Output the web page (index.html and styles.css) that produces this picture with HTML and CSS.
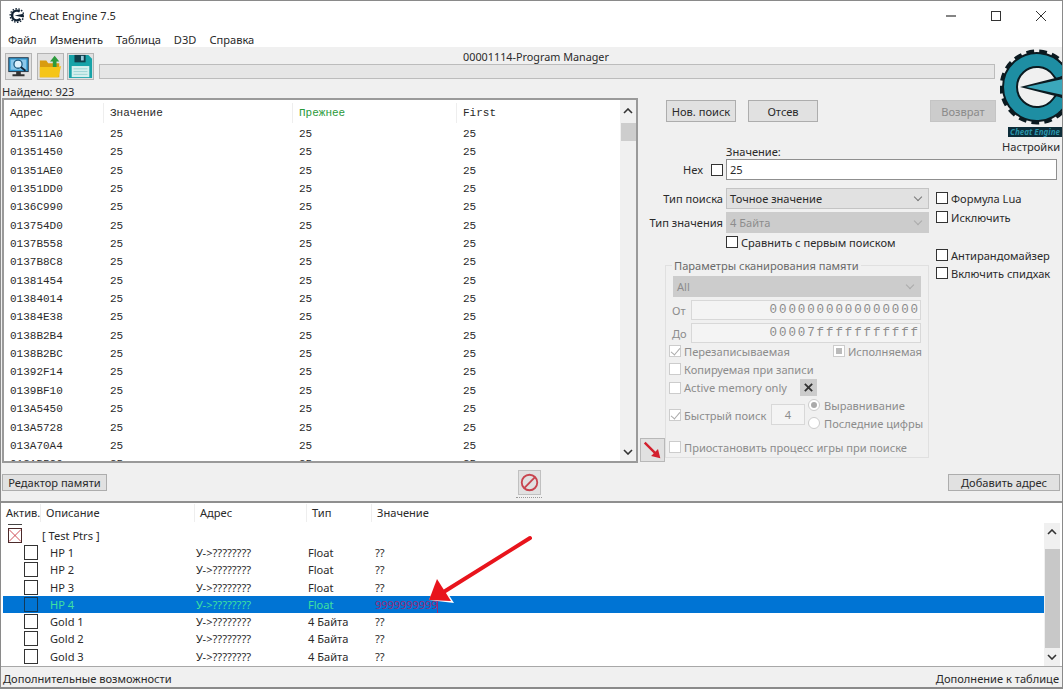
FILE: index.html
```html
<!DOCTYPE html>
<html lang="ru">
<head>
<meta charset="utf-8">
<title>Cheat Engine 7.5</title>
<link rel="stylesheet" href="styles.css">
</head>
<body>
<div class="window">
  <header class="titlebar">
    <svg class="app-icon" viewBox="0 0 16 16"><circle cx="8.5" cy="8" r="5.2" fill="none" stroke="#123" stroke-width="2.6" stroke-dasharray="23 15" stroke-dashoffset="-4"/><circle cx="8.5" cy="8" r="7.2" fill="none" stroke="#123" stroke-width="1.6" stroke-dasharray="1.6 1.6"/><path d="M15.5 6 6 8l9.500 2z" fill="#123"/></svg>
    <span class="app-title">Cheat Engine 7.5</span>
    <div class="win-controls">
      <svg viewBox="0 0 12 12"><path d="M1 6h10" stroke="#333" stroke-width="1.2"/></svg>
      <svg viewBox="0 0 12 12"><rect x="1.5" y="1.5" width="9" height="9" fill="none" stroke="#333"/></svg>
      <svg viewBox="0 0 12 12"><path d="M1 1l10 10M11 1 1 11" stroke="#333"/></svg>
    </div>
  </header>
  <nav class="menubar"><span class="m1">Файл</span><span class="m2">Изменить</span><span class="m3">Таблица</span><span class="m4">D3D</span><span class="m5">Справка</span></nav>

  <div class="upper">
    <div class="toolbar">
      <button class="tool t1"><svg viewBox="0 0 27 27"><rect x="3" y="4" width="21" height="15" fill="#2f98d0" stroke="#234"/><rect x="5" y="6" width="17" height="11" fill="#8cc8ea"/><circle cx="13" cy="11" r="4.4" fill="#dff1fb" stroke="#1c5a80" stroke-width="1.4"/><path d="m16 14 5 4" stroke="#123" stroke-width="2"/><path d="M11 19h5v3h-5zM7 22h13v2H7z" fill="#333"/></svg></button>
      <button class="tool t2"><svg viewBox="0 0 27 27"><path d="M2 7h7l2 3h12v15H2z" fill="#d99c10"/><path d="M2 14h20l3-1-3 12H2z" fill="#f5c518"/><path d="M18 2l5 6h-3v6h-4V8h-3z" fill="#2c9a3c"/></svg></button>
      <button class="tool t3"><svg viewBox="0 0 27 27"><path d="M1 1h21l4 4v21H1z" fill="#17a3a8"/><rect x="7" y="1" width="12" height="8" fill="#113f4a"/><rect x="14" y="2" width="3" height="5" fill="#9cd"/><rect x="4" y="13" width="19" height="12" fill="#d6f0ee"/><path d="M6 16h15M6 19h15M6 22h15" stroke="#8cc" stroke-width=".8"/></svg></button>
      <div class="process">
        <div class="process-name">00001114-Program Manager</div>
        <div class="progress"></div>
      </div>
    </div>
    <div class="found">Найдено: 923</div>

    <div class="logo-cell">
      <svg class="logo" viewBox="0 0 63 77">
        <circle cx="38" cy="38" r="34.500" fill="none" stroke="#0b1a20" stroke-width="6" stroke-dasharray="7.500 5" stroke-dashoffset="-27"/>
        <path d="M64 19 59.600 21.800A27 27 0 1 0 59.600 54.200L64 57" fill="none" stroke="#0b1a20" stroke-width="16"/>
        <path d="M64 19 59.600 21.800A27 27 0 1 0 59.600 54.200L64 57" fill="none" stroke="#1e8ea3" stroke-width="12"/>
        <path d="M64 27 21 38l43 11z" fill="#0b1a20"/>
        <path d="M64 30 27 38l37 8z" fill="#3ba7bb"/>
      </svg>
      <div class="logo-name">Cheat Engine</div>
      <div class="settings">Настройки</div>
    </div>

    <section class="scanlist">
      <div class="scan-head">
        <span>Адрес</span><span>Значение</span><span class="prev">Прежнее</span><span>First</span>
      </div>
      <div class="scan-body">
        <div class="scan-rows">
          <div class="srow"><span>013511A0</span><span>25</span><span>25</span><span>25</span></div>
          <div class="srow"><span>01351450</span><span>25</span><span>25</span><span>25</span></div>
          <div class="srow"><span>01351AE0</span><span>25</span><span>25</span><span>25</span></div>
          <div class="srow"><span>01351DD0</span><span>25</span><span>25</span><span>25</span></div>
          <div class="srow"><span>0136C990</span><span>25</span><span>25</span><span>25</span></div>
          <div class="srow"><span>013754D0</span><span>25</span><span>25</span><span>25</span></div>
          <div class="srow"><span>0137B558</span><span>25</span><span>25</span><span>25</span></div>
          <div class="srow"><span>0137B8C8</span><span>25</span><span>25</span><span>25</span></div>
          <div class="srow"><span>01381454</span><span>25</span><span>25</span><span>25</span></div>
          <div class="srow"><span>01384014</span><span>25</span><span>25</span><span>25</span></div>
          <div class="srow"><span>01384E38</span><span>25</span><span>25</span><span>25</span></div>
          <div class="srow"><span>0138B2B4</span><span>25</span><span>25</span><span>25</span></div>
          <div class="srow"><span>0138B2BC</span><span>25</span><span>25</span><span>25</span></div>
          <div class="srow"><span>01392F14</span><span>25</span><span>25</span><span>25</span></div>
          <div class="srow"><span>0139BF10</span><span>25</span><span>25</span><span>25</span></div>
          <div class="srow"><span>013A5450</span><span>25</span><span>25</span><span>25</span></div>
          <div class="srow"><span>013A5728</span><span>25</span><span>25</span><span>25</span></div>
          <div class="srow"><span>013A70A4</span><span>25</span><span>25</span><span>25</span></div>
          <div class="srow"><span>013AB5C0</span><span>25</span><span>25</span><span>25</span></div>
        </div>
      </div>
      <div class="vscroll scan-scroll">
        <svg class="sarrow" viewBox="0 0 10 6"><path d="M1 5l4-4 4 4" fill="none" stroke="#333" stroke-width="1.6"/></svg>
        <div class="scan-thumb"></div>
        <svg class="sarrow push-end" viewBox="0 0 10 6"><path d="M1 1l4 4 4-4" fill="none" stroke="#333" stroke-width="1.6"/></svg>
      </div>
    </section>

    <div class="scan-buttons">
      <button class="btn b-new">Нов. поиск</button>
      <button class="btn b-next">Отсев</button>
      <button class="btn b-undo" disabled>Возврат</button>
    </div>

    <div class="form">
      <div class="value-label">Значение:</div>
      <div class="hex-row">
        <span class="hex">Hex</span><span class="cb hex-cb"></span>
        <div class="value-input">25</div>
      </div>
      <div class="form-lower">
        <div class="form-main">
          <div class="field-row r-search">
            <label class="flabel">Тип поиска</label>
            <div class="select">Точное значение<i class="chev"></i></div>
          </div>
          <div class="field-row r-type">
            <label class="flabel">Тип значения</label>
            <div class="select off">4 Байта<i class="chev"></i></div>
          </div>
          <div class="compare"><span class="cb"></span>Сравнить с первым поиском</div>
          <div class="group-row">
            <button class="arrow-btn"><svg viewBox="0 0 25 24"><path d="M4 4l12 12" stroke="#d3202e" stroke-width="2.6"/><path d="M21 21l-10-2.5 7.5-7.5z" fill="#d3202e"/></svg></button>
            <fieldset class="group">
              <legend>Параметры сканирования памяти</legend>
              <div class="select off g-select">All<i class="chev"></i></div>
              <div class="range r-from"><span class="rl">От</span><div class="range-input">0000000000000000</div></div>
              <div class="range r-to"><span class="rl">До</span><div class="range-input">00007fffffffffff</div></div>
              <div class="gcheck two c-write">
                <span class="pair"><span class="cb dim ticked"></span>Перезаписываемая</span>
                <span class="pair"><span class="cb dim filled"></span>Исполняемая</span>
              </div>
              <div class="gcheck c-cow"><span class="cb dim"></span>Копируемая при записи</div>
              <div class="gcheck c-active"><span class="cb dim"></span>Active memory only<span class="xbtn"><svg viewBox="0 0 12 12"><path d="M2 2l8 8M10 2l-8 8" stroke="#333" stroke-width="2"/></svg></span></div>
              <div class="fast">
                <div class="fast-check"><span class="cb dim ticked"></span>Быстрый поиск</div>
                <div class="fast-num">4</div>
                <div class="radios">
                  <div class="radio-row"><span class="radio on"></span>Выравнивание</div>
                  <div class="radio-row"><span class="radio"></span>Последние цифры</div>
                </div>
              </div>
              <div class="gcheck c-pause"><span class="cb dim"></span>Приостановить процесс игры при поиске</div>
            </fieldset>
          </div>
        </div>
        <div class="form-side">
          <div class="side-check s1"><span class="cb"></span>Формула Lua</div>
          <div class="side-check s2"><span class="cb"></span>Исключить</div>
          <div class="side-check s3"><span class="cb"></span>Антирандомайзер</div>
          <div class="side-check s4"><span class="cb"></span>Включить спидхак</div>
        </div>
      </div>
    </div>
  </div>

  <div class="actions">
    <button class="btn b-mem">Редактор памяти</button>
    <button class="stop"><svg viewBox="0 0 23 24"><circle cx="11.5" cy="12" r="8.5" fill="none" stroke="#c8454f" stroke-width="2"/><path d="M6 18 17.500 6" stroke="#c8454f" stroke-width="2"/></svg></button>
    <button class="btn b-add">Добавить адрес</button>
  </div>
  <div class="splitter"><span class="grip"></span></div>

  <section class="table">
    <div class="thead">
      <span class="h1">Актив.</span><span class="h2">Описание</span><span class="h3">Адрес</span><span class="h4">Тип</span><span class="h5">Значение</span>
    </div>
    <div class="tbody">
      <div class="rows">
        <div class="row group-head"><span class="name"><span class="cbx crossed"><svg viewBox="0 0 14 14"><path d="M0 0l14 14M14 0 0 14" stroke="#c8323c"/></svg></span>[ Test Ptrs ]</span></div>
        <div class="row"><span class="name"><span class="cbx"></span>HP 1</span><span>У-&gt;????????</span><span>Float</span><span>??</span></div>
        <div class="row"><span class="name"><span class="cbx"></span>HP 2</span><span>У-&gt;????????</span><span>Float</span><span>??</span></div>
        <div class="row"><span class="name"><span class="cbx"></span>HP 3</span><span>У-&gt;????????</span><span>Float</span><span>??</span></div>
        <div class="row selected"><span class="name"><span class="cbx"></span>HP 4</span><span>У-&gt;????????</span><span>Float</span><span class="editing">9999999999</span></div>
        <div class="row"><span class="name"><span class="cbx"></span>Gold 1</span><span>У-&gt;????????</span><span>4 Байта</span><span>??</span></div>
        <div class="row"><span class="name"><span class="cbx"></span>Gold 2</span><span>У-&gt;????????</span><span>4 Байта</span><span>??</span></div>
        <div class="row"><span class="name"><span class="cbx"></span>Gold 3</span><span>У-&gt;????????</span><span>4 Байта</span><span>??</span></div>
      </div>
      <div class="vscroll table-scroll">
        <svg class="sarrow" viewBox="0 0 10 6"><path d="M1 5l4-4 4 4" fill="none" stroke="#333" stroke-width="1.6"/></svg>
        <div class="table-thumb"></div>
        <svg class="sarrow push-end" viewBox="0 0 10 6"><path d="M1 1l4 4 4-4" fill="none" stroke="#333" stroke-width="1.6"/></svg>
      </div>
    </div>
  </section>

  <footer class="status"><span>Дополнительные возможности</span><span>Дополнение к таблице</span></footer>

  <svg class="annotation" viewBox="0 0 1063 689"><path d="M429 600 438 578 454 603z" fill="#fff"/><path d="M530 538 442 593" stroke="#e8141c" stroke-width="4" stroke-linecap="round"/><path d="M429 600 437 579 451 601z" fill="#e8141c"/></svg>
</div>
</body>
</html>
```

FILE: styles.css
```css
* { box-sizing: border-box; }
html, body { margin: 0; padding: 0; }
body { width: 1063px; height: 689px; overflow: hidden; font-family: "Noto Sans", "Open Sans", sans-serif; font-size: 11.1px; color: #2a2a2a; }
button { font: inherit; color: inherit; padding: 0; }

.window { position: relative; width: 1063px; height: 689px; display: flex; flex-direction: column; background: #f0f0f0; border: 1px solid #8a8a8a; border-bottom-width: 2px; }

.titlebar { height: 29px; flex: none; background: #fff; display: flex; align-items: center; padding-left: 8px; }
.app-icon { width: 15px; height: 15px; }
.app-title { margin-left: 5px; font-size: 11px; }
.win-controls { margin-left: auto; display: flex; gap: 33px; padding-right: 15px; }
.win-controls svg { width: 12px; height: 12px; }

.menubar { height: 17px; flex: none; background: #fff; display: flex; align-items: center; padding: 1px 0 0 7px; }
.m2, .m3, .m4, .m5 { margin-left: 13px; }

.upper { flex: none; height: 416px; display: grid; grid-template-columns: 639px 360px 62px; grid-template-rows: 37px 14px 48px 317px; }

.toolbar { grid-column: 1 / 3; grid-row: 1; display: flex; padding: 6px 0 0 4px; }
.tool { width: 27px; height: 27px; background: #e1e1e1; border: 1px solid #b4b4b4; display: flex; }
.tool svg { width: 100%; height: 100%; }
.t2 { margin-left: 5px; }
.t3 { margin-left: 3px; }
.process { margin: -3px 0 0 5px; width: 896px; }
.process-name { height: 14px; line-height: 14px; text-align: center; font-size: 10.8px; padding-right: 22px; }
.progress { height: 15px; background: #e6e6e6; border: 1px solid #bcbcbc; }

.found { grid-column: 1 / 3; grid-row: 2; padding-left: 1px; line-height: 16px; }

.logo-cell { grid-column: 3; grid-row: 1 / 5; z-index: 1; padding-top: 2px; height: 110px; overflow: hidden; }
.logo { display: block; width: 63px; height: 77px; margin-left: -1px; }
.logo-name { margin: 1px 0 0 8px; width: 54px; height: 10px; background: #0c2c38; color: #2a93a8; font-size: 8px; line-height: 10px; font-weight: 700; font-style: italic; white-space: nowrap; overflow: hidden; text-align: center; }
.settings { margin: 3px 0 0 2px; text-align: left; line-height: 14px; }

.scanlist { grid-column: 1; grid-row: 3 / 5; margin-left: 1px; width: 636px; background: #fff; border: 2px solid #9a9a9a; display: grid; grid-template-columns: 1fr 16px; grid-template-rows: 25px 1fr; overflow: hidden; }
.scan-head, .srow { display: grid; grid-template-columns: 100px 189px 164px 1fr; font-family: "Liberation Mono", monospace; font-size: 11px; }
.scan-head { grid-column: 1; grid-row: 1; align-items: center; }
.scan-head span { padding-left: 6px; line-height: 20px; border-right: 1px solid #eee; }
.scan-head span:last-child { border-right: 0; }
.scan-head .prev { color: #2a9a3a; }
.scan-body { grid-column: 1; grid-row: 2; overflow: hidden; }
.srow { height: 18.35px; line-height: 18px; }
.srow span { padding-left: 6px; }
.scan-scroll { grid-column: 2; grid-row: 1 / 3; }

.vscroll { display: flex; flex-direction: column; align-items: center; background: #f0f0f0; }
.sarrow { width: 10px; height: 6px; flex: none; }
.push-end { margin-top: auto; }
.scan-scroll .sarrow:first-child { margin-top: 8px; }
.scan-scroll .push-end { margin-bottom: 6px; }
.scan-thumb { width: 15px; height: 18px; margin-top: 9px; background: #cdcdcd; }

.scan-buttons { grid-column: 2; grid-row: 3; display: flex; align-items: flex-start; padding: 2px 0 0 26px; }
.btn { height: 22px; background: #e1e1e1; border: 1px solid #adadad; }
.b-new { width: 70px; }
.b-next { width: 70px; margin-left: 12px; }
.b-undo { width: 66px; margin-left: auto; margin-right: 4px; background: #ccc; color: #8a8a8a; border-color: #c4c4c4; }

.form { grid-column: 2 / 4; grid-row: 4; padding-left: 0; }
.value-label { margin-left: 86px; height: 13px; line-height: 11px; }
.hex-row { display: flex; align-items: center; height: 21px; }
.hex { margin-left: 43px; width: 28px; }
.hex-cb { margin-right: 3px; }
.value-input { width: 331px; height: 21px; background: #fff; border: 1px solid #8f8f8f; padding-left: 3px; line-height: 19px; }

.cb { display: inline-block; flex: none; width: 12px; height: 12px; border: 1px solid #333; background: #fff; position: relative; }
.cb.dim { border-color: #ccc; }
.ticked::after { content: ""; position: absolute; left: 3px; top: 0; width: 4px; height: 8px; border: solid #aaa; border-width: 0 1.4px 1.4px 0; transform: rotate(40deg); }
.filled::after { content: ""; position: absolute; left: 2px; top: 2px; width: 6px; height: 6px; background: #bbb; }

.form-lower { display: flex; margin-top: 8px; }
.form-main { width: 289px; flex: none; }
.field-row { display: flex; align-items: center; height: 21px; }
.r-type { margin-top: 3px; }
.flabel { width: 83px; margin-right: 3px; text-align: right; white-space: nowrap; }
.select { position: relative; width: 203px; height: 21px; background: #e1e1e1; border: 1px solid #c4c4c4; padding-left: 3px; line-height: 19px; }
.select.off { background: #ccc; color: #8c8c8c; border-color: #ccc; }
.chev { position: absolute; right: 7px; top: 5px; width: 6px; height: 6px; border: solid #777; border-width: 0 1px 1px 0; transform: rotate(45deg); }
.select.off .chev { border-color: #aaa; }

.compare { display: flex; align-items: center; gap: 3px; height: 14px; margin: 2px 0 0 86px; }

.group-row { display: flex; align-items: flex-end; height: 213px; }
.arrow-btn { width: 25px; height: 24px; flex: none; background: #e1e1e1; border: 1px solid #b8b8b8; display: flex; }
.arrow-btn svg { width: 100%; height: 100%; }
.group { margin: 0 0 4px 0; padding: 0 0 0 3px; width: 264px; height: 199px; border: 1px solid #e0e0e0; color: #8c8c8c; min-width: 0; }
.group legend { margin-left: 3px; padding: 0 2px; height: 13px; line-height: 13px; color: #6a6a6a; white-space: nowrap; }
.g-select { width: 248px; margin: 4px 0 0 4px; }
.range { display: flex; align-items: center; height: 20px; margin-top: 3px; }
.rl { width: 22px; padding-left: 3px; flex: none; }
.range-input { width: 230px; height: 100%; background: #f4f4f4; border: 1px solid #d8d8d8; text-align: right; padding-right: 0; line-height: 18px; font-family: "Liberation Mono", monospace; font-size: 12.5px; letter-spacing: 1.9px; }
.gcheck { display: flex; align-items: center; gap: 3px; height: 14px; white-space: nowrap; }
.two { justify-content: space-between; margin-top: 1px; padding-right: 6px; }
.pair { display: flex; align-items: center; gap: 3px; }
.c-cow { margin-top: 4px; }
.c-active { margin-top: 3px; height: 17px; }
.xbtn { width: 17px; height: 17px; margin-left: 10px; background: #ccc; display: flex; align-items: center; justify-content: center; }
.xbtn svg { width: 11px; height: 11px; }
.fast { display: flex; height: 34px; margin-top: 2px; }
.fast-check { display: flex; align-items: center; gap: 3px; width: 102px; height: 34px; }
.fast-num { width: 34px; height: 21px; margin-top: 6px; background: #f4f4f4; border: 1px solid #d8d8d8; text-align: center; line-height: 19px; }
.radios { margin-left: 3px; white-space: nowrap; }
.radio-row { display: flex; align-items: center; gap: 4px; height: 14px; margin-bottom: 4px; }
.radio { width: 12px; height: 12px; border: 1px solid #ccc; border-radius: 50%; background: #fff; position: relative; }
.radio.on::after { content: ""; position: absolute; left: 2px; top: 2px; width: 6px; height: 6px; background: #aaa; border-radius: 50%; }
.c-pause { margin-top: 8px; }

.form-side { flex: 1; padding-left: 7px; }
.side-check { display: flex; align-items: center; gap: 3px; height: 14px; white-space: nowrap; }
.s1 { margin-top: 3px; }
.s2 { margin-top: 5px; }
.s3 { margin-top: 24px; }
.s4 { margin-top: 4px; }

.actions { flex: none; height: 33px; display: flex; align-items: center; justify-content: space-between; padding: 6px 2px 0 1px; }
.b-mem { width: 105px; height: 17px; line-height: 14px; }
.b-add { width: 112px; height: 17px; line-height: 14px; }
.stop { width: 23px; height: 25px; margin-left: 4px; background: #e1e1e1; border: 1px solid #c0c0c0; display: flex; }
.stop svg { width: 100%; height: 100%; }
.splitter { flex: none; height: 5px; display: flex; justify-content: center; }
.grip { width: 26px; margin-left: -6px; height: 1px; margin-top: 1px; border-top: 1px dotted #999; }

.table { flex: none; height: 165px; background: #fff; border-top: 2px solid #8f8f8f; display: flex; flex-direction: column; }
.thead { flex: none; height: 20px; display: grid; grid-template-columns: 39px 154px 112px 65px 1fr; align-items: center; }
.thead span { line-height: 18px; padding-left: 5px; border-left: 1px solid #eee; }
.thead .h1 { border-left: 0; }
.h3, .h4 { padding-left: 4px; }
.thead .h5 { padding-left: 5px; }
.tbody { flex: 1; display: flex; min-height: 0; }
.rows { flex: 1; padding: 3.5px 0 0 2px; }
.row { display: grid; grid-template-columns: 193px 112px 67px 1fr; height: 17.3px; line-height: 17px; align-items: center; }
.name { display: flex; align-items: center; padding-left: 21px; }
.cbx { width: 14px; height: 15px; flex: none; margin-right: 12px; border: 1px solid #333; background: #fff; display: flex; }
.group-head .name { padding-left: 5px; }
.group-head .cbx { position: relative; margin-right: 20px; border-color: #4a2a2a; background: #fff; }
.group-head .cbx::before { content: ""; position: absolute; left: -1px; top: -5px; width: 14px; height: 1px; background: #444; }
.cbx svg { width: 100%; height: 100%; }
.selected { background: #0074d4; color: #3fe0a0; }
.selected .cbx { background: #0074d4; border-color: #123a5a; }
.editing { color: #962a78; border-right: 1px solid #962a78; justify-self: start; letter-spacing: -.1px; }
.table-scroll { width: 16px; flex: none; margin-right: 2px; }
.table-scroll .sarrow:first-child { margin-top: 6px; }
.table-thumb { width: 15px; height: 99px; margin-top: 14px; background: #c8c8c8; }
.table-scroll .push-end { margin-bottom: 6px; }

.status { flex: 1; display: flex; justify-content: space-between; align-items: center; border-top: 1px solid #a8a8a8; padding: 3px 3px 0 2px; }

.annotation { position: absolute; left: -1px; top: -1px; width: 1063px; height: 689px; pointer-events: none; }
```
